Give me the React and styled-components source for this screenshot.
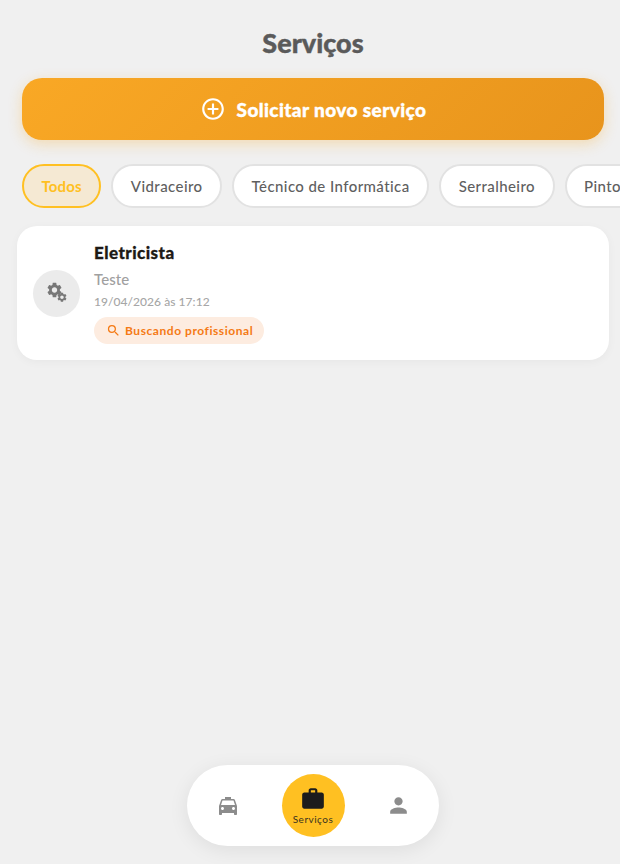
import React from 'react'
import styled, { createGlobalStyle } from 'styled-components'
import { MdAddCircleOutline, MdLocalTaxi, MdPerson, MdSearch, MdWork } from 'react-icons/md'

const filters = ['Todos', 'Vidraceiro', 'Técnico de Informática', 'Serralheiro', 'Pintor']

const gear = 'M19.14 12.94c.04-.3.06-.61.06-.94 0-.32-.02-.64-.07-.94l2.03-1.58a.49.49 0 0 0 .12-.61l-1.92-3.32a.488.488 0 0 0-.59-.22l-2.39.96c-.5-.38-1.03-.7-1.62-.94l-.36-2.54a.484.484 0 0 0-.48-.41h-3.84c-.24 0-.43.17-.47.41l-.36 2.54c-.59.24-1.13.57-1.62.94l-2.39-.96c-.22-.08-.47 0-.59.22L2.74 8.87c-.12.21-.08.47.12.61l2.03 1.58c-.05.3-.09.63-.09.94s.02.64.07.94l-2.03 1.58a.49.49 0 0 0-.12.61l1.92 3.32c.12.22.37.29.59.22l2.39-.96c.5.38 1.03.7 1.62.94l.36 2.54c.05.24.24.41.48.41h3.84c.24 0 .44-.17.47-.41l.36-2.54c.59-.24 1.13-.56 1.62-.94l2.39.96c.22.08.47 0 .59-.22l1.92-3.32c.12-.22.07-.47-.12-.61l-2.01-1.58zM12 15.6c-1.98 0-3.6-1.62-3.6-3.6s1.62-3.6 3.6-3.6 3.6 1.62 3.6 3.6-1.62 3.6-3.6 3.6z'

const GearsIcon = () => (
  <svg width="22" height="22" viewBox="0 0 22 22" fill="currentColor">
    <path d={gear} transform="translate(-0.5 -1) scale(0.75)" />
    <path d={gear} transform="translate(10.2 9.5) scale(0.48)" />
  </svg>
)

const App = () => (
  <>
    <GlobalStyle />
    <Screen>
      <Title>Serviços</Title>
      <RequestButton>
        <MdAddCircleOutline size={26} />
        Solicitar novo serviço
      </RequestButton>
      <Filters>
        {filters.map((name, i) => (
          <Chip key={name} $active={i === 0}>{name}</Chip>
        ))}
      </Filters>
      <Card>
        <Avatar><GearsIcon /></Avatar>
        <CardBody>
          <CardTitle>Eletricista</CardTitle>
          <CardText>Teste</CardText>
          <CardDate>19/04/2026 às 17:12</CardDate>
          <Status>
            <MdSearch size={15} />
            Buscando profissional
          </Status>
        </CardBody>
      </Card>
      <BottomNav>
        <NavItem><MdLocalTaxi size={24} /></NavItem>
        <NavActive>
          <MdWork size={26} />
          <NavLabel>Serviços</NavLabel>
        </NavActive>
        <NavItem><MdPerson size={25} /></NavItem>
      </BottomNav>
    </Screen>
  </>
)

export default App

const GlobalStyle = createGlobalStyle`
  html, body {
    margin: 0;
    padding: 0;
    background: #f0f0f0;
  }
  * {
    box-sizing: border-box;
  }
`

const Screen = styled.div`
  width: 620px;
  height: 864px;
  position: relative;
  overflow: hidden;
  background: #f0f0f0;
  font-family: 'Lato', 'Noto Sans', sans-serif;
  padding-top: 27px;
`

const Title = styled.h1`
  margin: 0 16px 0 22px;
  height: 32px;
  line-height: 32px;
  text-align: center;
  font-size: 27px;
  font-weight: 900;
  -webkit-text-stroke: 0.4px #5a5a5a;
  color: #5a5a5a;
`

const RequestButton = styled.div`
  margin: 19px 16px 0 22px;
  height: 62px;
  border-radius: 20px;
  background: linear-gradient(135deg, #f9a825 0%, #e8941c 100%);
  box-shadow: 0 4px 14px rgba(249, 168, 37, 0.3);
  display: flex;
  align-items: center;
  justify-content: center;
  gap: 11px;
  color: #fff;
  font-size: 19px;
  font-weight: 900;
  letter-spacing: 0.4px;
  -webkit-text-stroke: 0.4px #fff;
`

const Filters = styled.div`
  display: flex;
  gap: 10px;
  margin-top: 24px;
  padding-left: 22px;
  overflow: hidden;
`

const Chip = styled.div`
  flex: none;
  height: 44px;
  padding: 0 17.5px;
  display: flex;
  align-items: center;
  border-radius: 22px;
  border: 2px solid ${p => (p.$active ? '#ffc022' : '#e2e2e2')};
  background: ${p => (p.$active ? '#f5e9d3' : '#fff')};
  color: ${p => (p.$active ? '#ffc022' : '#5f5f5f')};
  font-size: 15px;
  font-weight: ${p => (p.$active ? 700 : 500)};
  letter-spacing: ${p => (p.$active ? '0.15px' : '0.42px')};
`

const Card = styled.div`
  margin: 18px 11px 0 17px;
  height: 134px;
  border-radius: 20px;
  background: #fff;
  box-shadow: 0 2px 10px rgba(0, 0, 0, 0.04);
  padding: 0 16px;
  display: flex;
  align-items: center;
  gap: 14px;
`

const Avatar = styled.div`
  width: 47px;
  height: 47px;
  border-radius: 50%;
  background: #ebebeb;
  color: #777;
  display: flex;
  align-items: center;
  justify-content: center;
`

const CardBody = styled.div`
  display: flex;
  flex-direction: column;
  align-items: flex-start;
`

const CardTitle = styled.div`
  font-size: 17px;
  font-weight: 900;
  letter-spacing: 0.45px;
  -webkit-text-stroke: 0.3px #1d1a16;
  color: #1d1a16;
  line-height: 20px;
`

const CardText = styled.div`
  margin-top: 6px;
  font-size: 15px;
  font-weight: 500;
  letter-spacing: 0.1px;
  color: #a0a0a0;
  line-height: 20px;
`

const CardDate = styled.div`
  margin-top: 4px;
  font-size: 12px;
  font-weight: 500;
  letter-spacing: 0.05px;
  color: #a6a6a6;
  line-height: 18px;
`

const Status = styled.div`
  margin-top: 6px;
  height: 27px;
  padding: 0 11px 0 12px;
  border-radius: 14px;
  background: #fdece0;
  color: #f57a14;
  font-size: 12px;
  font-weight: 700;
  letter-spacing: 0.55px;
  display: flex;
  align-items: center;
  gap: 4px;
`

const BottomNav = styled.nav`
  position: absolute;
  left: 187px;
  top: 765px;
  width: 252px;
  height: 81px;
  border-radius: 41px;
  background: #fff;
  box-shadow: 0 4px 20px rgba(0, 0, 0, 0.08);
  display: flex;
  align-items: center;
  justify-content: center;
  gap: 33px;
`

const NavItem = styled.div`
  width: 41px;
  display: flex;
  justify-content: center;
  color: #8c8c8c;
`

const NavActive = styled.div`
  width: 63px;
  height: 63px;
  border-radius: 50%;
  background: #ffc022;
  color: #1c1c1c;
  display: flex;
  flex-direction: column;
  align-items: center;
  justify-content: center;
`

const NavLabel = styled.span`
  margin-top: 1px;
  font-size: 10px;
  letter-spacing: 0.5px;
  font-weight: 400;
  color: #3a3320;
  line-height: 12px;
`
